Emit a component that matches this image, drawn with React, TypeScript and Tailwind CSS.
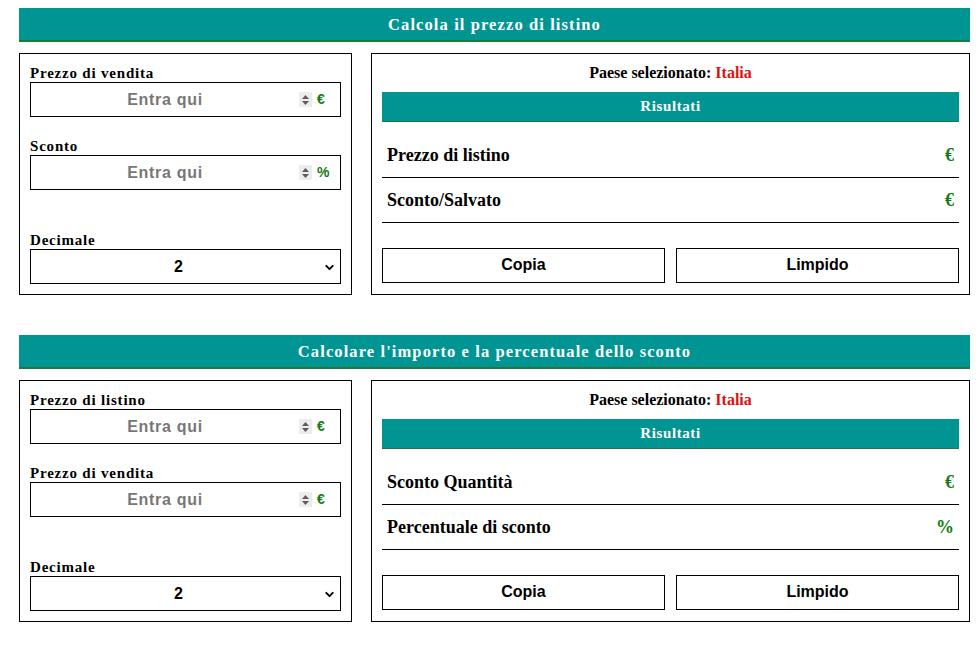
import React from 'react';
import { ChevronDown } from 'lucide-react';

const serif = "font-['Liberation_Serif','Times_New_Roman',serif]";
const sans = "font-['Liberation_Sans',Arial,sans-serif]";

type Field = { label: string; unit: string };
type Row = { label: string; unit: string };

const sections: { title: string; fields: Field[]; rows: Row[] }[] = [
  {
    title: 'Calcola il prezzo di listino',
    fields: [
      { label: 'Prezzo di vendita', unit: '€' },
      { label: 'Sconto', unit: '%' }
    ],
    rows: [
      { label: 'Prezzo di listino', unit: '€' },
      { label: 'Sconto/Salvato', unit: '€' }
    ]
  },
  {
    title: "Calcolare l'importo e la percentuale dello sconto",
    fields: [
      { label: 'Prezzo di listino', unit: '€' },
      { label: 'Prezzo di vendita', unit: '€' }
    ],
    rows: [
      { label: 'Sconto Quantità', unit: '€' },
      { label: 'Percentuale di sconto', unit: '%' }
    ]
  }
];

const Spinner = () => (
  <span className="flex h-[15px] w-[13px] flex-col items-center justify-center gap-[2px] bg-[#ececec]">
    <svg width="7" height="4" viewBox="0 0 7 4"><path d="M0 4 L3.5 0 L7 4 Z" fill="#5c5c5c" /></svg>
    <svg width="7" height="4" viewBox="0 0 7 4"><path d="M0 0 L3.5 4 L7 0 Z" fill="#5c5c5c" /></svg>
  </span>
);

const labelCls = `${serif} h-[18px] text-[15px] font-bold leading-[18px] tracking-[0.8px] text-black`;

const NumberField = ({ field }: { field: Field }) => (
  <div>
    <div className={labelCls}>{field.label}</div>
    <div className="flex h-[35px] items-center border border-black pr-[13px]">
      <input
        type="text"
        placeholder="Entra qui"
        className={`${sans} h-full min-w-0 flex-1 bg-transparent text-center text-[16px] font-bold tracking-[0.7px] text-black outline-none placeholder:text-[#777]`}
      />
      <Spinner />
      <span className={`${sans} ml-[5px] w-[10px] text-[14px] font-bold text-[#137a13]`}>{field.unit}</span>
    </div>
  </div>
);

const Section = ({ title, fields, rows }: { title: string; fields: Field[]; rows: Row[] }) => (
  <section>
    <h2
      className={`${serif} flex h-[34px] items-center justify-center border-b-2 border-[#1b7a3e] bg-[#009592] pt-[3px] text-[16.5px] font-bold tracking-[1.1px] text-white`}
    >
      {title}
    </h2>
    <div className="mt-[11px] flex gap-[19px]">
      <div className="w-[333px] border border-black p-[10px]">
        <div className="flex flex-col gap-[20px]">
          {fields.map((f) => (
            <NumberField key={f.label} field={f} />
          ))}
        </div>
        <div className="mt-[41px]">
          <div className={labelCls}>Decimale</div>
          <div className="relative h-[35px] border border-black">
            <select
              defaultValue="2"
              className={`${sans} h-full w-full appearance-none bg-white pr-[14px] text-[16px] font-bold text-black outline-none [text-align-last:center]`}
            >
              <option value="0">0</option>
              <option value="1">1</option>
              <option value="2">2</option>
              <option value="3">3</option>
            </select>
            <ChevronDown
              size={13}
              strokeWidth={3.5}
              className="pointer-events-none absolute right-[4px] top-[11px] text-black"
            />
          </div>
        </div>
      </div>

      <div className="flex-1 border border-black p-[10px]">
        <p className={`${serif} h-[28px] text-center text-[16px] font-bold leading-[18px] text-black`}>
          Paese selezionato: <span className="text-[#e01010]">Italia</span>
        </p>
        <div
          className={`${serif} flex h-[30px] items-center justify-center border-b border-[#1b7a3e] bg-[#009592] text-[15px] font-bold tracking-[0.6px] text-white`}
        >
          Risultati
        </div>
        <div className="mt-[11px]">
          {rows.map((r) => (
            <div
              key={r.label}
              className={`${serif} flex h-[45px] items-center justify-between border-b border-black px-[5px] text-[18px] font-bold text-black`}
            >
              <span>{r.label}</span>
              <span className="text-[18px] text-[#137a13]">{r.unit}</span>
            </div>
          ))}
        </div>
        <div className="mt-[25px] flex gap-[11px]">
          {['Copia', 'Limpido'].map((b) => (
            <button
              key={b}
              className={`${sans} h-[35px] flex-1 border border-black bg-white pb-[1px] text-[16px] font-bold text-black`}
            >
              {b}
            </button>
          ))}
        </div>
      </div>
    </div>
  </section>
);

export default function App() {
  return (
    <div className="min-h-[651px] w-[980px] bg-white px-[19px] pt-[8px]">
      <div className="flex w-[951px] flex-col gap-[40px]">
        {sections.map((s) => (
          <Section key={s.title} {...s} />
        ))}
      </div>
    </div>
  );
}
